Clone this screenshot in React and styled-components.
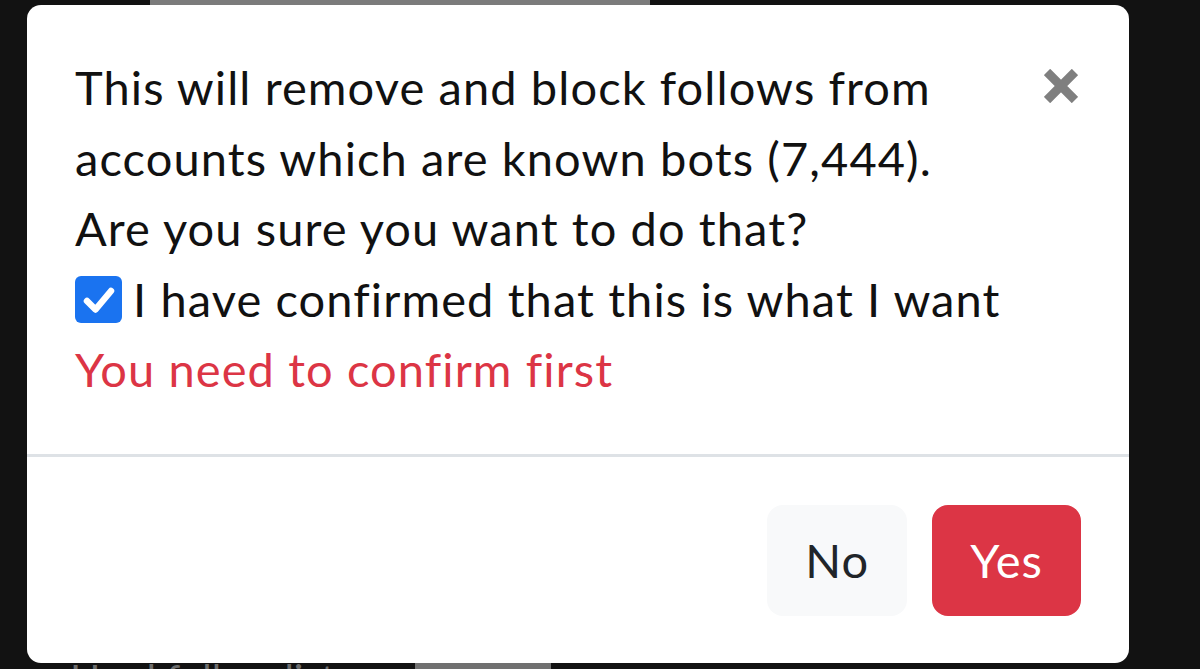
import React from "react";
import styled, { createGlobalStyle } from "styled-components";

const Global = createGlobalStyle`
  html, body { margin: 0; padding: 0; background: #121212; }
  body { font-family: Lato, "Open Sans", "Liberation Sans", sans-serif; }
  * { box-sizing: border-box; }
`;

const Page = styled.div`
  width: 1200px;
  height: 669px;
  background: #121212;
  position: relative;
  overflow: hidden;
  display: flex;
  flex-direction: column;
  justify-content: space-between;
`;

const TopStrip = styled.div`
  margin-left: 150px;
  width: 500px;
  height: 6px;
  background: #7b7b7b;
`;

const BottomRow = styled.div`
  display: flex;
  align-items: flex-start;
  height: 12px;
  padding-left: 70px;
`;

const GhostText = styled.span`
  font-size: 40px;
  line-height: 1;
  color: #6c6c6c;
  margin-top: 2px;
  white-space: nowrap;
`;

const GhostChip = styled.div`
  width: 136px;
  height: 12px;
  background: #707070;
  margin-left: 80px;
`;

const Backdrop = styled.div`
  position: absolute;
  inset: 0;
  padding: 5px 71px 0 27px;
`;

const Modal = styled.div`
  width: 1102px;
  background: #fff;
  border-radius: 14px;
  overflow: hidden;
  color: #111;
`;

const Body = styled.div`
  display: flex;
  align-items: flex-start;
  padding: 47px 47px 49px 48px;
  font-size: 47px;
  line-height: 70.5px;
  letter-spacing: 1.1px;
  border-bottom: 3px solid #dee2e6;
`;

const Content = styled.div`
  flex: 1;
`;

const Line = styled.div`
  color: ${(p) => (p.$danger ? "#dc3545" : "#111")};
`;

const CheckRow = styled.label`
  display: flex;
  align-items: center;
  gap: 11px;
`;

const CheckBox = styled.span`
  width: 47px;
  height: 47px;
  border-radius: 6px;
  background: #1a73f0;
  display: inline-flex;
  align-items: center;
  justify-content: center;
  margin-top: 2px;
  flex: none;
`;

const CloseButton = styled.button`
  border: 0;
  background: transparent;
  padding: 0;
  margin: 17px 4px 0 0;
  width: 34px;
  height: 34px;
  display: flex;
  cursor: pointer;
`;

const Footer = styled.div`
  display: flex;
  justify-content: flex-end;
  align-items: center;
  gap: 25px;
  padding: 48px 48px 47px;
`;

const Button = styled.button`
  font-family: inherit;
  font-size: 47px;
  line-height: 70.5px;
  letter-spacing: 1.1px;
  padding: 17.6px 35px;
  border: 3px solid ${(p) => (p.$variant === "danger" ? "#dc3545" : "#f8f9fa")};
  border-radius: 16px;
  background: ${(p) => (p.$variant === "danger" ? "#dc3545" : "#f8f9fa")};
  color: ${(p) => (p.$variant === "danger" ? "#fff" : "#212529")};
  cursor: pointer;
`;

export default function App() {
  return (
    <>
      <Global />
      <Page>
        <TopStrip />
        <BottomRow>
          <GhostText>Hard follow list</GhostText>
          <GhostChip />
        </BottomRow>
        <Backdrop>
          <Modal>
            <Body>
              <Content>
                <Line>This will remove and block follows from</Line>
                <Line>accounts which are known bots (7,444).</Line>
                <Line>Are you sure you want to do that?</Line>
                <CheckRow>
                  <CheckBox>
                    <svg width="34" height="34" viewBox="0 0 34 34">
                      <path
                        d="M5 18 L13.5 26.5 L29 8"
                        fill="none"
                        stroke="#fff"
                        strokeWidth="6.5"
                        strokeLinecap="round"
                        strokeLinejoin="round"
                      />
                    </svg>
                  </CheckBox>
                  <span>I have confirmed that this is what I want</span>
                </CheckRow>
                <Line $danger>You need to confirm first</Line>
              </Content>
              <CloseButton aria-label="Close">
                <svg width="34" height="34" viewBox="0 0 34 34">
                  <path
                    d="M3 3 L31 31 M31 3 L3 31"
                    stroke="#7f7f7f"
                    strokeWidth="9"
                    strokeLinecap="butt"
                  />
                </svg>
              </CloseButton>
            </Body>
            <Footer>
              <Button>No</Button>
              <Button $variant="danger">Yes</Button>
            </Footer>
          </Modal>
        </Backdrop>
      </Page>
    </>
  );
}
